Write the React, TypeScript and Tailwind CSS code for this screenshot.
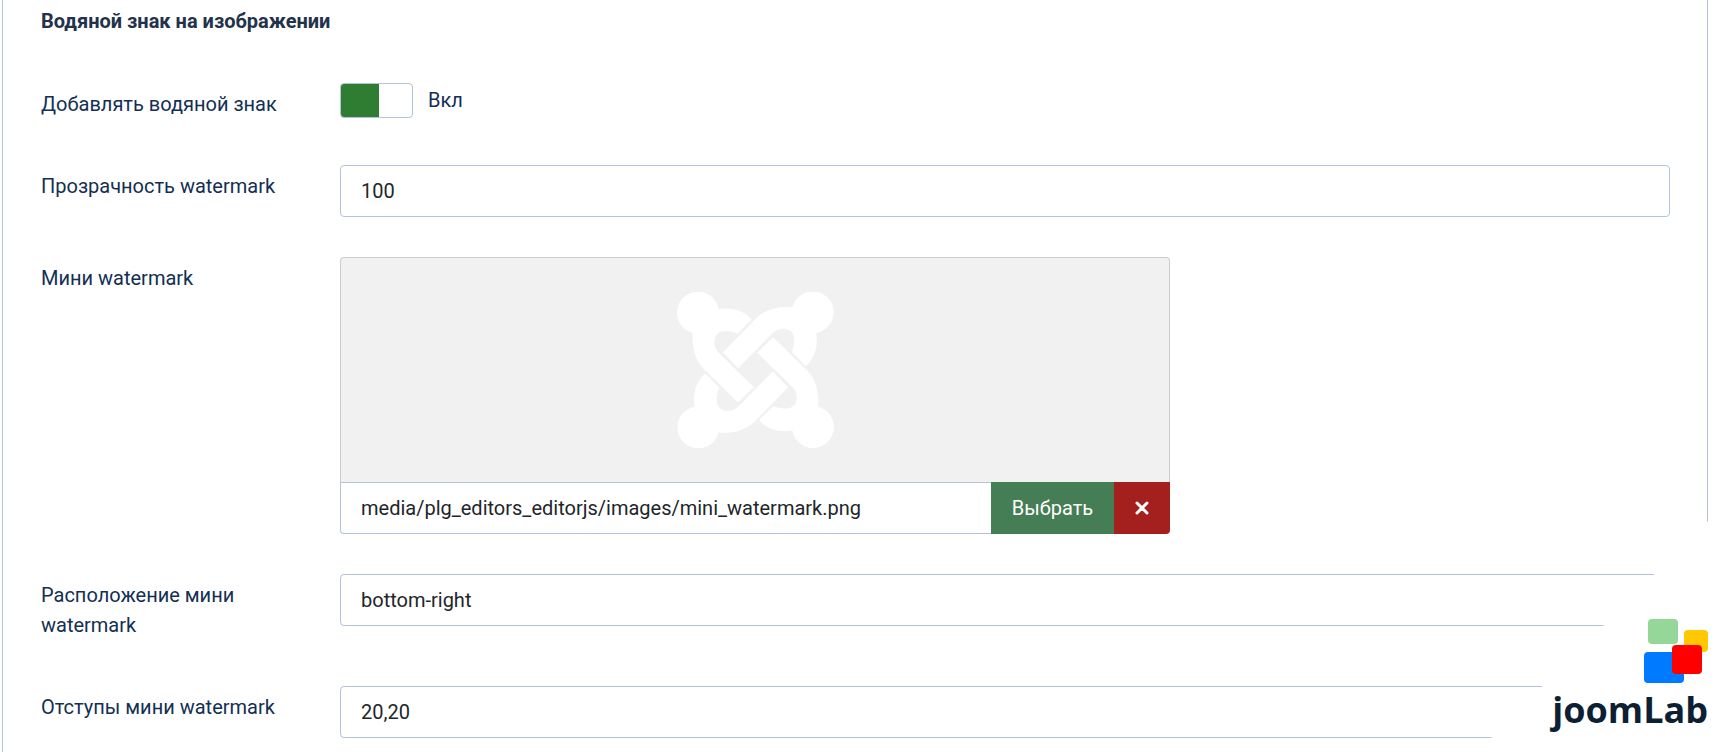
import React from 'react';

const control =
    'block h-[52px] w-full appearance-none rounded border border-[#b4c3d9] bg-white px-5 text-xl text-[#22262a] outline-none';

type FieldProps = {
    id: string;
    label: string;
    children: React.ReactNode;
};

const Field: React.FC<FieldProps> = ({ id, label, children }) => (
    <div className="flex items-start gap-6">
        <label htmlFor={id} className="w-[275px] shrink-0 py-1.5 leading-[30px]">
            {label}
        </label>
        <div className="min-w-0 flex-1">{children}</div>
    </div>
);

// One strand of the knot, repeated every quarter turn
const strands = [0, 90, 180, 270];

const JoomlaMark: React.FC = () => (
    <svg className="size-[157px]" viewBox="110 125 472 472" fill="#fff" aria-hidden="true">
        {strands.map((angle) => (
            <g key={angle} transform={`rotate(${angle} 346 359)`}>
                <circle cx="173" cy="187" r="63" />
                <path d="M158 235C154 285 160 325 190 356L293 457L341 411L240 312C220 296 216 268 232 250C248 238 275 242 292 250L335 208C310 178 270 170 230 177Z" />
            </g>
        ))}
    </svg>
);

const JoomLabBadge: React.FC = () => (
    <div className="pointer-events-none absolute right-0 bottom-0 flex size-[251px] flex-col items-end justify-end bg-white pr-5 pb-4 [clip-path:polygon(100%_0,100%_100%,0_100%)]">
        <svg className="h-16 w-16" viewBox="0 0 64 64" aria-hidden="true">
            <rect x="4" width="30" height="25" rx="4" fill="#95d798" />
            <rect x="40" y="11" width="24" height="22" rx="4" fill="#ffc800" />
            <rect y="33" width="40" height="31" rx="4" fill="#007bff" />
            <rect x="28" y="26" width="30" height="29" rx="4" fill="#f00" />
        </svg>
        <span className="font-['Open_Sans',sans-serif] text-4xl leading-[53px] font-bold text-[#0d1f33]">
            joomLab
        </span>
    </div>
);

const App: React.FC = () => {
    return (
        <div className="relative overflow-hidden bg-white font-[Roboto,sans-serif] text-xl text-[#132f53]">
            <form className="mr-5 ml-0.5 border-x border-[#b4c3d9] pt-1.5 pr-[37px] pb-3.5 pl-[38px]">
                <h2 className="mb-[47px] leading-[30px] font-bold text-[#22324a]">Водяной знак на изображении</h2>

                <div className="flex flex-col gap-10">
                    <Field id="enabled" label="Добавлять водяной знак">
                        <div className="flex items-start gap-[15px]">
                            <input
                                id="enabled"
                                type="checkbox"
                                role="switch"
                                defaultChecked
                                className="h-[35px] w-[73px] appearance-none rounded border border-[#b4c3d9] checked:bg-[linear-gradient(90deg,#2f7d32_38px,#fff_38px)]"
                            />
                            <span className="leading-[34px]">Вкл</span>
                        </div>
                    </Field>

                    <Field id="opacity" label="Прозрачность watermark">
                        <input id="opacity" type="text" defaultValue="100" className={control} />
                    </Field>

                    <Field id="mini" label="Мини watermark">
                        <div className="max-w-[830px]">
                            {/* Preview */}
                            <div className="flex h-[225px] items-center justify-center rounded-t border border-b-0 border-[#c9cdd3] bg-[#f1f1f1]">
                                <JoomlaMark />
                            </div>
                            <div className="flex h-[52px]">
                                <input
                                    id="mini"
                                    type="text"
                                    defaultValue="media/plg_editors_editorjs/images/mini_watermark.png"
                                    className="min-w-0 flex-1 rounded-bl border border-r-0 border-[#b4c3d9] px-5 text-[#22262a] outline-none"
                                />
                                <button type="button" className="w-[123px] bg-[#457d54] text-white">
                                    Выбрать
                                </button>
                                <button
                                    type="button"
                                    aria-label="Очистить"
                                    className="flex w-14 items-center justify-center rounded-br bg-[#a3201f] text-white"
                                >
                                    <svg className="size-4" viewBox="0 0 16 16" fill="none" stroke="currentColor" strokeWidth="3" strokeLinecap="round">
                                        <path d="M3 3l10 10M13 3L3 13" />
                                    </svg>
                                </button>
                            </div>
                        </div>
                    </Field>

                    <Field id="position" label="Расположение мини watermark">
                        <select id="position" defaultValue="bottom-right" className={control}>
                            <option value="bottom-right">bottom-right</option>
                        </select>
                    </Field>

                    <Field id="offset" label="Отступы мини watermark">
                        <input id="offset" type="text" defaultValue="20,20" className={control} />
                    </Field>
                </div>
            </form>

            <JoomLabBadge />
        </div>
    );
};

export default App;
